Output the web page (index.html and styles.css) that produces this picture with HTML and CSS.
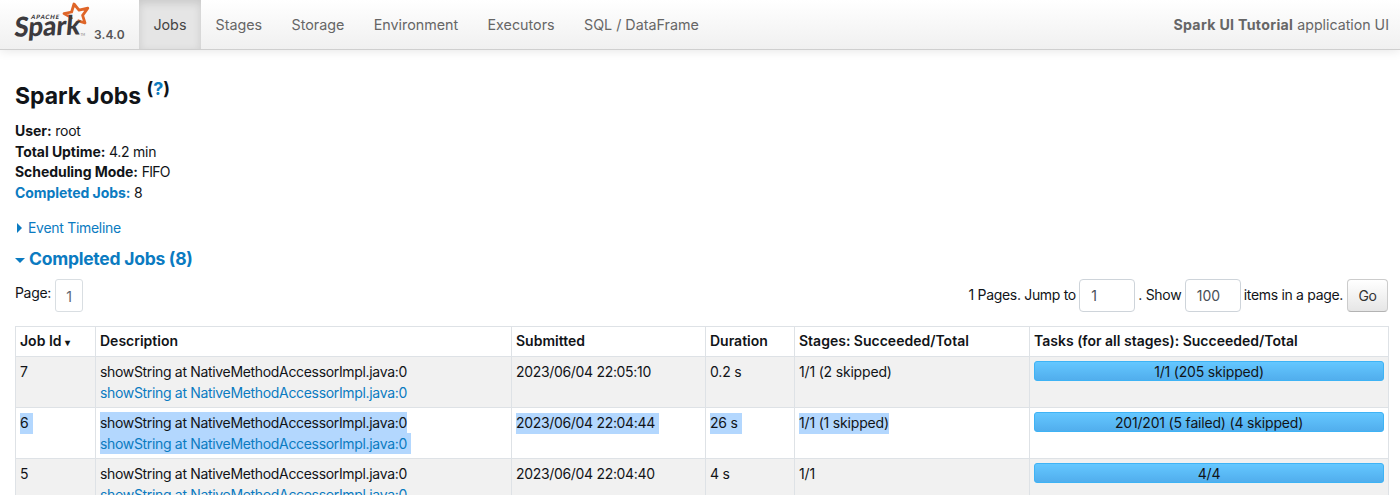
FILE: index.html
```
<!DOCTYPE html>
<html lang="en">
<head>
<meta charset="utf-8">
<title>Spark UI Tutorial - Spark Jobs</title>
<link rel="stylesheet" href="styles.css">
</head>
<body>
<nav class="navbar">
  <a class="brand">
    <svg class="logo" viewBox="0 0 78 44" width="78" height="44">
      <path class="star" d="M57.5 19.2 L56.8 17.2 L50 13.6 L57.6 12 L60 4 L65 10.2 L73.8 8.2 L68.6 15.4 L71 23 L63.5 20.6"/>
      <text class="logo-small" transform="translate(16.8 19.4) skewX(-12)" textLength="28">APACHE</text>
      <text class="logo-word" transform="translate(-.3 36.8) rotate(-2) skewX(-7)" textLength="66" lengthAdjust="spacingAndGlyphs">Spark</text>
      <text class="logo-tm" x="66.5" y="35.5">TM</text>
    </svg>
    <span class="version">3.4.0</span>
  </a>
  <ul class="tabs">
    <li class="tab active">Jobs</li>
    <li class="tab">Stages</li>
    <li class="tab">Storage</li>
    <li class="tab">Environment</li>
    <li class="tab">Executors</li>
    <li class="tab">SQL / DataFrame</li>
  </ul>
  <p class="app-name"><strong>Spark UI Tutorial</strong> application UI</p>
</nav>
<main class="content">
  <h3 class="title">Spark Jobs <sup class="help">(<a>?</a>)</sup></h3>
  <ul class="summary">
    <li><strong>User:</strong> root</li>
    <li><strong>Total Uptime:</strong> 4.2 min</li>
    <li><strong>Scheduling Mode:</strong> <span class="mode">FIFO</span></li>
    <li><a><strong>Completed Jobs:</strong></a> 8</li>
  </ul>
  <a class="timeline"><span class="arrow-right"></span>Event Timeline</a>
  <h4 class="section"><span class="arrow-down"></span>Completed Jobs (8)</h4>
  <div class="pager">
    <div class="pages"><span>Page:</span><span class="page-box">1</span></div>
    <form class="jump">
      <label>1 Pages. Jump to</label><span class="field">1</span>
      <label>. Show</label><span class="field">100</span>
      <label>items in a page.</label><span class="go">Go</span>
    </form>
  </div>
  <table class="jobs">
    <colgroup><col class="c1"><col class="c2"><col class="c3"><col class="c4"><col class="c5"><col class="c6"></colgroup>
    <thead>
      <tr><th>Job Id <span class="sort">▾</span></th><th>Description</th><th>Submitted</th><th>Duration</th><th>Stages: Succeeded/Total</th><th>Tasks (for all stages): Succeeded/Total</th></tr>
    </thead>
    <tbody>
      <tr class="odd">
        <td>7</td>
        <td class="desc"><span>showString at NativeMethodAccessorImpl.java:0</span><br><a>showString at NativeMethodAccessorImpl.java:0</a></td>
        <td class="date">2023/06/04 22:05:10</td><td>0.2 s</td><td>1/1 (2 skipped)</td>
        <td><div class="progress">1/1 (205 skipped)</div></td>
      </tr>
      <tr>
        <td><span class="sel tail">6</span></td>
        <td class="desc"><span class="sel">showString at NativeMethodAccessorImpl.java:0</span><br><a class="sel tail">showString at NativeMethodAccessorImpl.java:0</a></td>
        <td class="date"><span class="sel tail">2023/06/04 22:04:44</span></td><td><span class="sel tail">26 s</span></td><td><span class="sel">1/1 (1 skipped)</span></td>
        <td><div class="progress">201/201 (5 failed) (4 skipped)</div></td>
      </tr>
      <tr class="odd">
        <td>5</td>
        <td class="desc"><span>showString at NativeMethodAccessorImpl.java:0</span><br><a>showString at NativeMethodAccessorImpl.java:0</a></td>
        <td class="date">2023/06/04 22:04:40</td><td>4 s</td><td>1/1</td>
        <td><div class="progress">4/4</div></td>
      </tr>
    </tbody>
  </table>
</main>
</body>
</html>
```
FILE: styles.css
```
* { box-sizing: border-box; }
body {
  margin: 0;
  height: 495px;
  overflow: hidden;
  background: #fff;
  color: #111418;
  font: 14px/20.7px Inter, "Liberation Sans", sans-serif;
}
a { color: #0b7bc1; text-decoration: none; }
strong { font-weight: 650; }
ul { list-style: none; margin: 0; padding: 0; }

.navbar {
  display: flex;
  height: 50px;
  padding: 0 11px 0 14px;
  background: linear-gradient(#fff, #f0f0f0);
  border-bottom: 1px solid #cfcfcf;
  box-shadow: 0 1px 10px rgba(0, 0, 0, .1);
  color: #666;
}
.brand { display: flex; width: 125px; color: #555; }
.logo { display: block; flex: none; overflow: visible; }
.star { fill: none; stroke: #df6528; stroke-width: 2.8; stroke-linejoin: round; }
.logo-small { font: 900 6px Lato, sans-serif; fill: #3c3a3e; }
.logo-word { font: 900 27px Lato, sans-serif; fill: #3c3a3e; }
.logo-tm { font: 3px Lato, sans-serif; fill: #777; }
.version { margin: 24.5px 0 0 2px; font-size: 12px; font-weight: 600; letter-spacing: .1px; }
.tabs { display: flex; font-size: 14.3px; }
.tab { padding: 15px 14.7px 0; height: 49px; white-space: nowrap; }
.tab:first-child { padding: 15px 14.4px 0; }
.tab.active { color: #444; background: #e5e5e5; box-shadow: inset 0 3px 8px rgba(0, 0, 0, .125); }
.app-name { margin: 15px 0 0 auto; font-size: 14.2px; }
.app-name strong { font-weight: 700; letter-spacing: .3px; }

.content { padding: 32px 12px 0 15px; }
.title { margin: 0; font-size: 23px; line-height: 28px; font-weight: 650; letter-spacing: -.05px; }
.help { font-size: 18px; line-height: 0; }
.summary { margin-top: 11px; letter-spacing: -.25px; }
.summary strong { letter-spacing: -.06px; }
.mode { letter-spacing: -.7px; }
.timeline { display: flex; align-items: center; margin-top: 14px; letter-spacing: -.3px; }
.arrow-right { margin: 0 6px 0 2px; border: solid transparent; border-width: 5px 0 5px 5px; border-left-color: #0b7bc1; }
.section { display: flex; align-items: center; margin: 9px 0 0; font-size: 17.5px; line-height: 22px; font-weight: 650; letter-spacing: -.25px; color: #0b7bc1; }
.arrow-down { margin: 3px 4px 0 0; border: solid transparent; border-width: 5px 5px 0; border-top-color: #0b7bc1; }

.pager { display: flex; justify-content: space-between; height: 47px; margin-top: 9px; letter-spacing: -.32px; }
.pages { display: flex; align-items: flex-start; gap: 4px; padding-top: 4px; }
.page-box { width: 28px; height: 33px; margin-top: -4px; border: 1px solid #d9dee2; border-radius: 3px; line-height: 33px; text-align: center; color: #5c6570; }
.jump { display: flex; align-items: center; height: 33px; }
.field { width: 56px; height: 33px; margin: 0 3px 0 3.5px; padding-left: 11px; border: 1px solid #ced4da; border-radius: 4px; line-height: 32px; color: #495057; letter-spacing: 0; }
.go { width: 41px; height: 33px; margin-left: 4px; border: 1px solid #ccc; border-bottom-color: #b3b3b3; border-radius: 4px; background: linear-gradient(#fff, #e6e6e6); line-height: 31px; text-align: center; color: #333; }

.jobs { width: 1373px; table-layout: fixed; border-collapse: collapse; }
.c1 { width: 80px; }
.c2 { width: 416px; }
.c3 { width: 194px; }
.c4 { width: 89px; }
.c5 { width: 235px; }
.c6 { width: 359px; }
.jobs th, .jobs td { border: 1px solid #dee2e6; padding: 4px 4px 0; text-align: left; vertical-align: top; white-space: nowrap; }
.jobs th { height: 30px; font-weight: 600; }
.jobs td { height: 51px; padding-top: 5px; letter-spacing: -.18px; }
.jobs .desc { padding-top: 4px; letter-spacing: -.33px; line-height: 21px; }
.jobs .date { letter-spacing: -.32px; }
.odd { background: #f1f1f1; }
.sort { font-size: 10px; }
.sel { display: inline-block; height: 21px; vertical-align: top; background: #b3d7fe; }
.tail { padding-right: 4px; }
.progress { height: 20px; margin-top: -1px; border-radius: 3px; background: linear-gradient(#64c7ff, #51aeed); border: 1px solid #3eb3f5; text-align: center; line-height: 20px; }
```
